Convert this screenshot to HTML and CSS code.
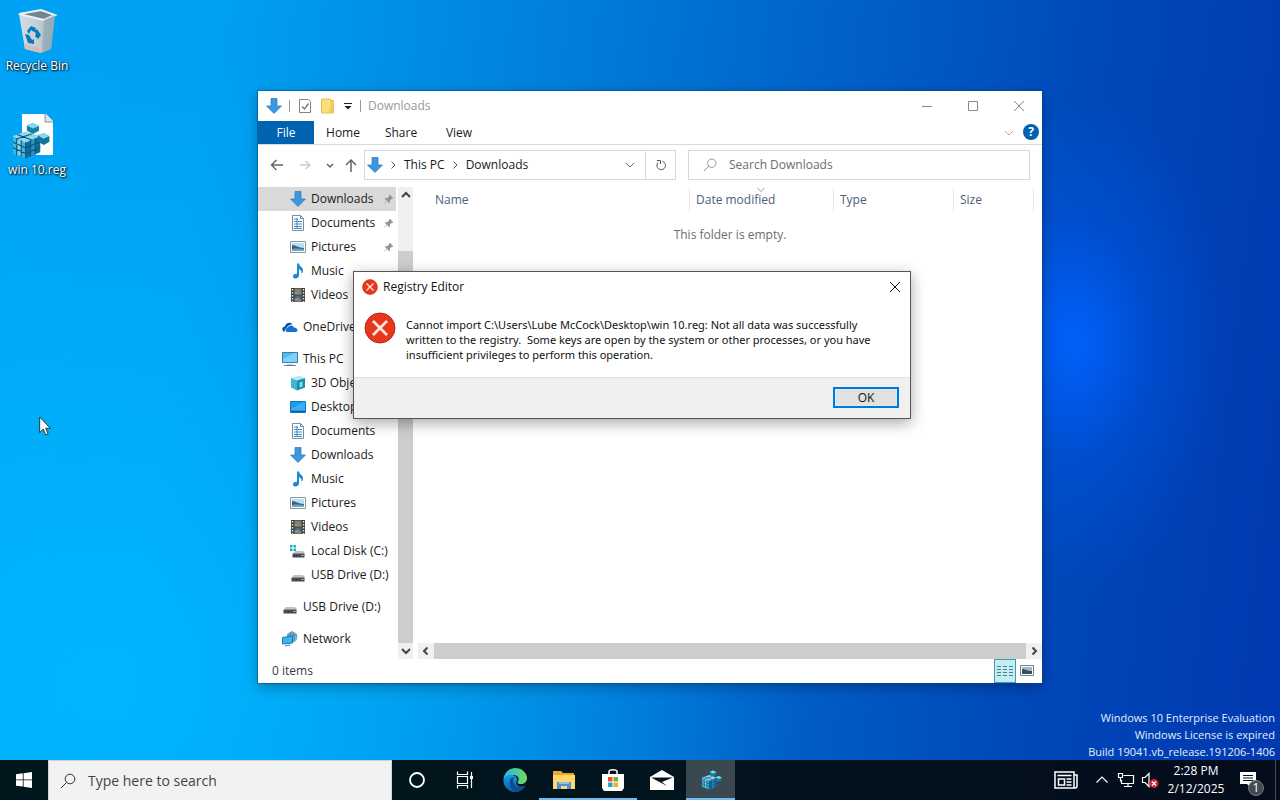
FILE: index.html
```html
<!DOCTYPE html>
<html lang="en">
<head>
    <meta charset="UTF-8">
    <meta name="viewport" content="width=device-width, initial-scale=1.0">
    <title>Desktop</title>
    <link rel="stylesheet" href="styles.css">
</head>
<body>

    <!-- icon sprite -->
    <svg class="sprite" aria-hidden="true">
        <defs>
            <linearGradient id="edge-a" x1="0" y1="0" x2="1" y2="0"><stop offset="0" stop-color="#2bb4e8"/><stop offset="1" stop-color="#6ddc5a"/></linearGradient>
            <linearGradient id="edge-b" x1="0" y1="0" x2="0" y2="1"><stop offset="0" stop-color="#1d9be6"/><stop offset="1" stop-color="#0c59a4"/></linearGradient>
            <linearGradient id="bin-a" x1="0" y1="0" x2="1" y2="0"><stop offset="0" stop-color="#d3dde3"/><stop offset=".55" stop-color="#c2ced6"/><stop offset="1" stop-color="#8fa5b3"/></linearGradient>
        </defs>
        <symbol id="i-down" viewBox="0 0 16 16"><path d="M5 .5h6V8h4.500L8 15.500.5 8H5z" fill="#3c97e0" stroke="#2a78bd" stroke-width=".7"/></symbol>
        <symbol id="i-doc" viewBox="0 0 16 16"><path d="M2.500.5h8l3 3v12h-11z" fill="#fff" stroke="#7b8b97"/><path d="M10.500.5v3h3" fill="none" stroke="#7b8b97"/><path d="M4 4h4M4 6.500h8M4 9h8M4 11.500h8M4 13.500h8M7 3v10" stroke="#3d8fc8"/></symbol>
        <symbol id="i-pic" viewBox="0 0 16 16"><path d="M.5 2.500h15v11H.5z" fill="#fff" stroke="#8a97a1"/><path d="M2 4h12v8H2z" fill="#b9dcf0"/><path d="M2 6c4 0 6 3 12 3v3H2z" fill="#35647f"/><path d="M2 10c4-1 8 0 12 0v2H2z" fill="#6fa5bd"/></symbol>
        <symbol id="i-music" viewBox="0 0 16 16"><path d="M7 .5h1.800c.4 2.800 4.700 3.800 4.200 7.500-.2 1.500-1 2.200-1.800 2.700.9-2.700-.6-4-2.200-4.500v6.300c0 3.300-5.800 4-6 1.200C2.900 11.200 5.500 10.500 7 11z" fill="#1b8ad3"/></symbol>
        <symbol id="i-video" viewBox="0 0 16 16"><path d="M1 1h14v14H1z" fill="#3d3d3d"/><path d="M4.500 1.500h7v6h-7z" fill="#7d7f68"/><path d="M4.500 8.500h7v6h-7z" fill="#36689a"/><path d="M4.500 5l3-2 4 3v1.500h-7zM4.500 12l3-2 4 3v1.500h-7z" fill="#8f8a6a"/><path d="M2.500 2v13M13.500 2v13" stroke="#e4e4e4" stroke-width="1.500" stroke-dasharray="1.500 1.500"/></symbol>
        <symbol id="i-cloud" viewBox="0 0 16 16"><path d="M1.600 12.500C-1 10.500.8 7.600 3 7.500 3.800 3.500 8.500 2.500 10.500 5.500 6 5.500 5.200 8 5 9c-2 .5-2.700 2-2 3.500z" fill="#0a4fa6"/><path d="M5.500 13c-3-.5-2.500-3.700 0-4C6.500 5.500 11 5.700 12 8.500c3-.3 5 3.500 2 4.500z" fill="#1173cf"/></symbol>
        <symbol id="i-pc" viewBox="0 0 16 16"><path d="M.5 1.500h15v10H.5z" fill="#4fb9f1" stroke="#3b7ea8"/><path d="M1 8L12 2h3v9H1z" fill="#7ed1fa"/><path d="M2 14.500h12" stroke="#6a7f8c"/><path d="M5 13.500h6" stroke="#b9c6ce"/></symbol>
        <symbol id="i-cube" viewBox="0 0 16 16"><path d="M1 3l9-2.500 5 2.500-8 2.500z" fill="#b5eaf0"/><path d="M1 3l6 2.500v10L1 12.500z" fill="#3cb6d0"/><path d="M7 5.500L15 3v9.500l-8 3z" fill="#1590ad"/><path d="M9.500 7.500l3-1v5l-3 1z" fill="#8bdce8"/></symbol>
        <symbol id="i-desk" viewBox="0 0 16 16"><path d="M.5 2.500h15v11H.5z" fill="#1c9bea" stroke="#1275bb"/><path d="M1 10L13 3h2v8H1z" fill="#37aef5"/><path d="M1 12.500h14" stroke="#0f5f9e"/></symbol>
        <symbol id="i-drive" viewBox="0 0 16 16"><path d="M4 8h9l2 2.500H2z" fill="#c2c2c2"/><path d="M1.500 10.500h13v4h-13z" fill="#4a4a4a"/><path d="M11.500 12.500h2" stroke="#a7e2a5"/></symbol>
        <symbol id="i-disk" viewBox="0 0 16 16"><path d="M5 8h8l2 2.500H3z" fill="#c2c2c2"/><path d="M2.500 10.500h12v4h-12z" fill="#4a4a4a"/><path d="M11.500 12.500h2" stroke="#a7e2a5"/><path d="M0 2h2.500v2.500H0zM3.500 2H6v2.500H3.500zM0 5.500h2.500V8H0zM3.500 5.500H6V8H3.500z" fill="#18b0c4"/></symbol>
        <symbol id="i-net" viewBox="0 0 16 16"><circle cx="10" cy="6" r="5.500" fill="#7fb3cf"/><path d="M10 .5c-3 3-3 8 0 11M10 .5c3 3 3 8 0 11M5 4h10" fill="none" stroke="#4b88ad"/><path d="M.5 6.500l10-1.500v7L.5 13z" fill="#3eb3ef" stroke="#1878b4"/><path d="M3 15l5-1" stroke="#397fa9"/></symbol>
        <symbol id="i-pin" viewBox="0 0 12 12"><path d="M7 1l4 4-1 1-.8-.2L7 8l.2 2-1 1L4 8.500 1 11.500l-.5-.5 3-3L1 5.800l1-1 2 .2 2.200-2.200L6 2z" fill="#8b949a"/></symbol>
        <symbol id="i-right" viewBox="0 0 10 10"><path d="M3.500 1.500L7 5 3.500 8.500" class="line"/></symbol>
        <symbol id="i-left" viewBox="0 0 10 10"><path d="M6.500 1.500L3 5l3.500 3.500" class="line"/></symbol>
        <symbol id="i-chev" viewBox="0 0 10 10"><path d="M1 3l4 4 4-4" class="line"/></symbol>
        <symbol id="i-chevup" viewBox="0 0 10 10"><path d="M1 7l4-4 4 4" class="line"/></symbol>
        <symbol id="i-x" viewBox="0 0 12 12"><path d="M1 1l10 10M11 1L1 11" class="line"/></symbol>
        <symbol id="i-mag" viewBox="0 0 16 16"><circle cx="10" cy="6" r="4.800" class="line"/><path d="M6.500 9.500L1 15" class="line"/></symbol>
        <symbol id="i-error" viewBox="0 0 32 32"><circle cx="16" cy="16" r="15" fill="#e8371a" stroke="#b92a1a"/><path d="M9 9l14 14M23 9L9 23" stroke="#fbe9e4" stroke-width="2.600"/></symbol>
        <symbol id="i-reg" viewBox="0 0 32 32">
            <path d="M1 13l11-4 12 4-12 5z" fill="#8fd8ec"/>
            <path d="M1 13l11 5v13L1 27z" fill="#45b4d8"/>
            <path d="M12 18l12-5v13l-12 5z" fill="#0f6f9c"/>
            <path d="M5 14.800l3.500 1.600v13L5 28z" fill="#7fd3ea"/>
            <path d="M16 16.500l4-1.700v13L16 29.500z" fill="#2792bd"/>
            <path d="M1 17.500l11 5 12-5M1 22l11 5 12-5M4.700 14.500v14M8.400 16.200v13.500M12 18v13M16 16.500v13M20 14.800v13M5 11.500l12 4.500M17 11l-12 4" fill="none" stroke="#0b5478" stroke-width=".9"/>
            <path d="M13 4l5-2 5 2.500v4L18 11l-5-2.500z" fill="#1781ab"/><path d="M13 4l5-2 5 2.500-5 2z" fill="#83dbf0"/>
            <path d="M22 12l5-1.500 4.500 2.500v4.500L27 20l-5-2.500z" fill="#15749f"/><path d="M22 12l5-1.500 4.500 2.500-5 2z" fill="#83dbf0"/>
        </symbol>
    </svg>

    <main class="desktop">

        <a href="#" class="shortcut shortcut-bin">
            <svg class="shortcut-icon" viewBox="0 0 48 48">
                <path d="M6 6l22-4 14 5-4 34-10 4-16-4z" fill="url(#bin-a)"/>
                <path d="M6 6l22-4 14 5-11 5z" fill="#71858f" stroke="#e9f2f6" stroke-width="2"/>
                <path d="M31 12l11-5-4 34-9 4z" fill="#93a9b7" opacity=".7"/>
                <path d="M11 36l18 4-1 5-16-4z" fill="#d2bfb9"/>
                <path d="M14 23l4-5 5 2-2 4-3-2-2 4zM24 21l4 6-3 4-3-3 1-2-2-3zM12 26l4 1 3 5 2-1v5l-6-1z" fill="#0b77bc"/>
            </svg>
            <span>Recycle Bin</span>
        </a>
        <a href="#" class="shortcut shortcut-reg">
            <svg class="shortcut-icon" viewBox="0 0 48 48">
                <path d="M9 2h24l7 7v34H9z" fill="#fdfdfd"/>
                <path d="M32 2v8h8" fill="#dbe3e8" stroke="#8597a2"/>
                <use href="#i-reg" x="-2" y="8" width="39" height="40"/>
            </svg>
            <span>win 10.reg</span>
        </a>

        <svg class="cursor" viewBox="0 0 12 20"><path d="M.7 1v15.500l3.600-3.400 2.400 5.700 2.400-1-2.400-5.500h4.600z" fill="#fff" stroke="#222" stroke-width=".9"/></svg>

        <section class="window" aria-label="Downloads">
            <header class="titlebar">
                <svg class="icon"><use href="#i-down"/></svg>
                <span class="divider"></span>
                <svg class="icon icon-check" viewBox="0 0 16 16"><path d="M2.500 1.500h9l2 2v11h-11z" fill="#fff" stroke="#8c8079"/><path d="M5 8.500L7.500 11l4-5.500" fill="none" stroke="#7d706a" stroke-width="1.300"/></svg>
                <svg class="icon" viewBox="0 0 16 16"><path d="M1.500 1h9v1.500h3V15h-12z" fill="#fae07d" stroke="#e6bf4f"/><path d="M11 3h2.500v12H9z" fill="#f2ca54"/></svg>
                <svg class="icon-small" viewBox="0 0 10 10"><path d="M1 2.500h8" stroke="#222"/><path d="M1.500 5h7L5 8.500z" fill="#222"/></svg>
                <span class="divider"></span>
                <span class="titlebar-text">Downloads</span>
                <div class="caption-buttons">
                    <button type="button" aria-label="Minimize"><svg viewBox="0 0 12 12"><path d="M1 6.500h10" class="line"/></svg></button>
                    <button type="button" aria-label="Maximize"><svg viewBox="0 0 12 12"><path d="M1.500 1.500h9v9h-9z" class="line"/></svg></button>
                    <button type="button" aria-label="Close"><svg><use href="#i-x"/></svg></button>
                </div>
            </header>

            <nav class="ribbon">
                <button type="button" class="ribbon-tab active">File</button>
                <button type="button" class="ribbon-tab">Home</button>
                <button type="button" class="ribbon-tab">Share</button>
                <button type="button" class="ribbon-tab">View</button>
                <button type="button" class="ribbon-expand" aria-label="Expand the Ribbon"><svg><use href="#i-chev"/></svg></button>
                <button type="button" class="help" aria-label="Help">?</button>
            </nav>

            <div class="toolbar">
                <div class="nav-buttons">
                    <button type="button" aria-label="Back"><svg viewBox="0 0 14 14"><path d="M13 7H2M6.500 2L1.500 7l5 5" class="line"/></svg></button>
                    <button type="button" aria-label="Forward" disabled><svg viewBox="0 0 14 14"><path d="M2 7h10M7.500 3L12 7l-4.500 4" class="line"/></svg></button>
                    <button type="button" class="recent" aria-label="Recent locations"><svg viewBox="0 0 10 10"><path d="M2 4l3 3 3-3" class="line"/></svg></button>
                    <button type="button" class="up" aria-label="Up"><svg viewBox="0 0 14 14"><path d="M7 14V2M2 7l5-5 5 5" class="line"/></svg></button>
                </div>
                <div class="address">
                    <svg class="icon"><use href="#i-down"/></svg>
                    <svg class="crumb-arrow"><use href="#i-right"/></svg>
                    <a href="#">This PC</a>
                    <svg class="crumb-arrow"><use href="#i-right"/></svg>
                    <a href="#">Downloads</a>
                    <button type="button" class="address-drop" aria-label="Previous locations"><svg><use href="#i-chev"/></svg></button>
                    <button type="button" class="refresh" aria-label="Refresh"><svg viewBox="0 0 12 12"><path d="M3 3.500a4.300 4.300 0 1 0 4.500-1.200M2 1.500h3.500V5" class="line"/></svg></button>
                </div>
                <label class="search">
                    <svg><use href="#i-mag"/></svg>
                    <input type="text" placeholder="Search Downloads" aria-label="Search Downloads">
                </label>
            </div>

            <div class="window-body">
                <nav class="tree">
                    <a href="#" class="tree-item child selected"><svg class="icon"><use href="#i-down"/></svg>Downloads<svg class="pin"><use href="#i-pin"/></svg></a>
                    <a href="#" class="tree-item child"><svg class="icon"><use href="#i-doc"/></svg>Documents<svg class="pin"><use href="#i-pin"/></svg></a>
                    <a href="#" class="tree-item child"><svg class="icon"><use href="#i-pic"/></svg>Pictures<svg class="pin"><use href="#i-pin"/></svg></a>
                    <a href="#" class="tree-item child"><svg class="icon"><use href="#i-music"/></svg>Music</a>
                    <a href="#" class="tree-item child"><svg class="icon"><use href="#i-video"/></svg>Videos</a>
                    <a href="#" class="tree-item root"><svg class="icon"><use href="#i-cloud"/></svg>OneDrive</a>
                    <a href="#" class="tree-item root"><svg class="icon"><use href="#i-pc"/></svg>This PC</a>
                    <a href="#" class="tree-item child"><svg class="icon"><use href="#i-cube"/></svg>3D Objects</a>
                    <a href="#" class="tree-item child"><svg class="icon"><use href="#i-desk"/></svg>Desktop</a>
                    <a href="#" class="tree-item child"><svg class="icon"><use href="#i-doc"/></svg>Documents</a>
                    <a href="#" class="tree-item child"><svg class="icon"><use href="#i-down"/></svg>Downloads</a>
                    <a href="#" class="tree-item child"><svg class="icon"><use href="#i-music"/></svg>Music</a>
                    <a href="#" class="tree-item child"><svg class="icon"><use href="#i-pic"/></svg>Pictures</a>
                    <a href="#" class="tree-item child"><svg class="icon"><use href="#i-video"/></svg>Videos</a>
                    <a href="#" class="tree-item child"><svg class="icon"><use href="#i-disk"/></svg>Local Disk (C:)</a>
                    <a href="#" class="tree-item child"><svg class="icon"><use href="#i-drive"/></svg>USB Drive (D:)</a>
                    <a href="#" class="tree-item root"><svg class="icon"><use href="#i-drive"/></svg>USB Drive (D:)</a>
                    <a href="#" class="tree-item root"><svg class="icon"><use href="#i-net"/></svg>Network</a>
                </nav>
                <div class="scroll-v">
                    <button type="button" aria-label="Scroll up"><svg><use href="#i-chevup"/></svg></button>
                    <div class="scroll-track"><div class="scroll-thumb"></div></div>
                    <button type="button" aria-label="Scroll down"><svg><use href="#i-chev"/></svg></button>
                </div>
                <div class="content">
                    <table class="files">
                        <thead>
                            <tr>
                                <th class="col-name">Name</th>
                                <th class="col-date">Date modified<svg class="sort" viewBox="0 0 10 6"><path d="M1.500 1L5 4.500 8.500 1" class="line"/></svg></th>
                                <th class="col-type">Type</th>
                                <th class="col-size">Size</th>
                            </tr>
                        </thead>
                    </table>
                    <p class="empty">This folder is empty.</p>
                    <div class="scroll-h">
                        <button type="button" aria-label="Scroll left"><svg><use href="#i-left"/></svg></button>
                        <div class="scroll-thumb"></div>
                        <button type="button" aria-label="Scroll right"><svg><use href="#i-right"/></svg></button>
                    </div>
                </div>
            </div>

            <footer class="statusbar">
                <span>0 items</span>
                <div class="view-buttons">
                    <button type="button" class="active" aria-label="Details"><svg viewBox="0 0 16 16"><path d="M0 3.500h4M6 3.500h4M12 3.500h4M0 6.500h4M6 6.500h4M12 6.500h4M0 9.500h4M6 9.500h4M12 9.500h4M0 12.500h4M6 12.500h4M12 12.500h4" stroke="#4f7d8e"/></svg></button>
                    <button type="button" aria-label="Large icons"><svg viewBox="0 0 16 16"><path d="M1.500 2.500h13v10h-13z" fill="#fff" stroke="#76828a"/><path d="M3 4h10v7H3z" fill="#9db9c9"/><path d="M3 6c3 0 5 2 10 2v3H3z" fill="#35505f"/></svg></button>
                </div>
            </footer>
        </section>

        <section class="dialog" role="alertdialog" aria-labelledby="dialog-title">
            <header class="dialog-title">
                <svg class="icon"><use href="#i-error"/></svg>
                <span id="dialog-title">Registry Editor</span>
                <button type="button" class="dialog-close" aria-label="Close"><svg><use href="#i-x"/></svg></button>
            </header>
            <div class="dialog-body">
                <svg class="dialog-icon"><use href="#i-error"/></svg>
                <p>Cannot import C:\Users\Lube McCock\Desktop\win 10.reg: Not all data was successfully<br>written to the registry.&nbsp; Some keys are open by the system or other processes, or you have<br>insufficient privileges to perform this operation.</p>
            </div>
            <footer class="dialog-footer">
                <button type="button" class="ok">OK</button>
            </footer>
        </section>

        <div class="watermark">
            Windows 10 Enterprise Evaluation<br>
            Windows License is expired<br>
            Build 19041.vb_release.191206-1406
        </div>
    </main>

    <footer class="taskbar">
        <button type="button" class="start" aria-label="Start"><svg viewBox="0 0 16 16"><path d="M0 2.300l6.800-1v6.200H0zM7.600 1.200L16 0v7.500H7.600zM0 8.300h6.800v6.300L0 13.700zM7.600 8.300H16V16l-8.400-1.200z" fill="#fff"/></svg></button>
        <label class="taskbar-search">
            <svg><use href="#i-mag"/></svg>
            <input type="text" placeholder="Type here to search" aria-label="Type here to search">
        </label>
        <div class="apps">
            <button type="button" class="app" aria-label="Cortana"><svg viewBox="0 0 24 24"><circle cx="12" cy="12" r="7" fill="none" stroke="#fff" stroke-width="1.800"/></svg></button>
            <button type="button" class="app" aria-label="Task View"><svg viewBox="0 0 24 24"><path d="M3.500 3.500v3h10v-3M3.500 20.500v-3h10v3M3.500 8.500h10v7h-10zM17.500 4v16" fill="none" stroke="#fff" stroke-width="1.200"/><path d="M16 8h3v3h-3z" fill="#fff"/></svg></button>
            <button type="button" class="app" aria-label="Microsoft Edge"><svg viewBox="0 0 24 24">
                <path d="M.5 12C.5 5 6 0 12 0c7 0 12 5 12 10 0 4-3 6-6 6-4 0-4-1.500-3-3 2-3-1-6-4.500-6C6 7 2 9 .5 12z" fill="url(#edge-a)"/>
                <path d="M.5 12C2 8 7 6 11 7.500c3 1.200 4 4 2.500 6C12 16 15 19 19 18.500c1.500 0 2.500-.6 3.500-1C20 22 16 24 12 24 5 24 0 18 .5 12z" fill="url(#edge-b)"/>
                <path d="M9 9.500C5.500 12 6 20 12 24c4 0 8-2 10.500-6.500-3 2-9 2.500-11.500-1.500-1.500-2.500-1-5 .5-6.500z" fill="#0e4b91"/>
            </svg></button>
            <button type="button" class="app running" aria-label="File Explorer"><svg viewBox="0 0 24 24"><path d="M1 3h8l2 2h11v5H1z" fill="#e9a72c"/><path d="M1 7h22v14H1z" fill="#ffd667"/><path d="M5 21v-7h14v7h-4v-3H9v3z" fill="#4b94d8"/><path d="M7 14h10v2H7z" fill="#8bc0ea"/></svg></button>
            <button type="button" class="app running" aria-label="Microsoft Store"><svg viewBox="0 0 24 24"><path d="M8 6V3.500C8 1 16 1 16 3.500V6" fill="none" stroke="#fff" stroke-width="1.500"/><path d="M1 6h22v14l-2 3H3l-2-3z" fill="#fff"/><path d="M7 9h4.500v4.500H7z" fill="#e84f2a"/><path d="M12.500 9H17v4.500h-4.500z" fill="#7aae28"/><path d="M7 14.500h4.500V19H7z" fill="#28a0da"/><path d="M12.500 14.500H17V19h-4.500z" fill="#f0b323"/></svg></button>
            <button type="button" class="app" aria-label="Mail"><svg viewBox="0 0 24 24"><path d="M0 9l12-7 12 7v13H0z" fill="#fff"/><path d="M1 9.500h22L12 14l5 4z" fill="#06161c"/></svg></button>
            <button type="button" class="app running current" aria-label="Registry Editor"><svg viewBox="0 0 32 32"><use href="#i-reg" x="3" y="1" width="28" height="29"/></svg></button>
        </div>
        <div class="tray">
            <button type="button" class="news" aria-label="News and interests"><svg viewBox="0 0 24 18"><path d="M1 1h19v16H1zM20 4h3v11q0 2-2 2h-3M3.500 4.500h14M4.500 8h6v6h-6zM12.500 8h5M12.500 11h5M12.500 14h5" fill="none" stroke="#fff" stroke-width="1.500"/></svg></button>
            <button type="button" class="tray-icon" aria-label="Show hidden icons"><svg viewBox="0 0 18 18"><path d="M3.500 11.500L9 6l5.500 5.500" class="line"/></svg></button>
            <button type="button" class="tray-icon" aria-label="Network"><svg viewBox="0 0 18 18"><path d="M6.500 4.500h10v8H4.500V9M11 12.500v3M7 15.500h8M1.500 2.500h4v4h-4zM3.500 6.500v4" class="line"/></svg></button>
            <button type="button" class="tray-icon" aria-label="Volume"><svg viewBox="0 0 18 18"><path d="M1.500 6.500H4l4-4v13l-4-4H1.500z" class="line"/><circle cx="13" cy="12.500" r="4.500" fill="#d3212e"/><path d="M11 10.500l4 4M15 10.500l-4 4" stroke="#fff" stroke-width="1.300"/></svg></button>
            <div class="clock">
                <span>2:28 PM</span>
                <span>2/12/2025</span>
            </div>
            <button type="button" class="notifications" aria-label="Notifications">
                <svg viewBox="0 0 16 16"><path d="M0 0h16v12h-5v4l-4-4H0z" fill="#fff"/><path d="M3 3.500h10M3 6h10M3 8.500h10" stroke="#07121c"/></svg>
                <span class="badge">1</span>
            </button>
        </div>
    </footer>

</body>
</html>
```
FILE: styles.css
```css
:root {
    --text: #1a1a1a;
    --text-muted: #6d6d6d;
    --text-header: #4c607a;
    --line: #d9d9d9;
    --thumb: #cdcdcd;
    --accent: #0063b1;
}

* { box-sizing: border-box; }

body {
    margin: 0;
    height: 100vh;
    display: flex;
    flex-direction: column;
    overflow: hidden;
    font-family: "Segoe UI", "Open Sans", "Noto Sans", sans-serif;
    font-size: 12px;
    line-height: 16px;
    color: var(--text);
}

button {
    display: flex; align-items: center; justify-content: center;
    padding: 0; border: 0; background: none;
    font: inherit; color: inherit;
}
input { border: 0; padding: 0; background: none; font: inherit; color: inherit; outline: none; min-width: 0; flex: 1; }
a { color: inherit; text-decoration: none; }
p { margin: 0; }

.sprite { position: absolute; width: 0; height: 0; }
.line { fill: none; stroke: currentColor; }
.icon { width: 16px; height: 16px; flex-shrink: 0; }
.icon-small { width: 10px; height: 10px; }

/* == Desktop == */
.desktop {
    flex: 1;
    position: relative;
    min-height: 0;
    background:
        radial-gradient(ellipse 150px 240px at 84% 45%, rgba(0, 98, 255, 0.95), rgba(0, 88, 235, 0.4) 50%, rgba(0, 80, 220, 0) 100%),
        radial-gradient(ellipse 700px 640px at 8% 90%, rgba(0, 184, 255, 0.9), rgba(0, 180, 255, 0) 100%),
        linear-gradient(97deg, #00a2f5 0%, #00a0f2 16%, #0086e0 36%, #0066cc 58%, #0049ba 80%, #0038b0 100%);
}

.shortcut {
    position: absolute; left: 0; width: 74px;
    display: flex; flex-direction: column; align-items: center; gap: 2px;
    color: #fff;
    text-shadow: 1px 1px 2px #000, 0 0 2px rgba(0, 0, 0, 0.8);
}
.shortcut-bin { top: 8px; }
.shortcut-reg { top: 112px; }
.shortcut-icon { width: 48px; height: 48px; }

.cursor { position: absolute; left: 39px; top: 416px; width: 12px; height: 20px; }

.watermark {
    position: absolute; right: 5px; bottom: 0;
    font-size: 11px; line-height: 17px; text-align: right;
    color: #e4eefb;
}

/* == Explorer window == */
.window {
    position: absolute; left: 258px; right: 238px; top: 91px; bottom: 77px;
    display: flex; flex-direction: column;
    background: #fff;
    box-shadow: 0 0 0 1px rgba(0, 70, 130, 0.5), 0 4px 12px rgba(0, 0, 0, 0.3);
}

.titlebar { display: flex; align-items: center; gap: 7px; height: 30px; padding-left: 8px; flex-shrink: 0; }
.titlebar-text { color: #999; }
.divider { width: 1px; height: 12px; background: #999; }
.caption-buttons { margin-left: auto; display: flex; color: #888; }
.caption-buttons button { width: 46px; height: 30px; }
.caption-buttons svg { width: 12px; height: 12px; }

.ribbon { display: flex; height: 24px; border-bottom: 1px solid var(--line); flex-shrink: 0; }
.ribbon-tab { width: 58px; }
.ribbon-tab.active { width: 56px; background: var(--accent); color: #fff; }
.ribbon-expand { margin-left: auto; width: 26px; color: #aaa; }
.ribbon-expand svg { width: 10px; height: 10px; }
.help {
    width: 16px; height: 16px; margin: 3px 3px 0 1px;
    border-radius: 50%; background: var(--accent); color: #fff; font-weight: 700;
}

.toolbar { display: flex; align-items: center; height: 42px; padding: 0 12px 2px 0; flex-shrink: 0; }
.nav-buttons { display: flex; width: 106px; padding-left: 11px; color: #666; }
.nav-buttons button { width: 16px; height: 30px; margin-right: 12px; }
.nav-buttons svg { width: 14px; height: 14px; }
.nav-buttons .line { stroke-width: 1.5; }
.nav-buttons button:disabled { color: #ccc; }
.nav-buttons .recent { width: 10px; margin-right: 8px; }
.nav-buttons .recent svg { width: 10px; height: 10px; }
.nav-buttons .up { margin-right: 0; }
.address { flex: 1; display: flex; align-items: center; height: 30px; padding-left: 2px; border: 1px solid var(--line); }
.crumb-arrow { width: 10px; height: 10px; margin: 0 6px 0 5px; color: #555; }
.address-drop { margin-left: auto; width: 30px; height: 28px; color: #666; }
.address-drop svg { width: 10px; height: 10px; }
.address-drop .line { stroke-width: 2; }
.refresh { width: 30px; height: 28px; border-left: 1px solid var(--line); color: #555; }
.refresh svg { width: 12px; height: 12px; }
.search {
    width: 342px; height: 30px; margin-left: 12px; padding-left: 14px;
    display: flex; align-items: center; gap: 12px;
    border: 1px solid var(--line); color: #888;
}
.search svg { width: 14px; height: 14px; }
.search input::placeholder { color: var(--text-muted); opacity: 1; }

.window-body { flex: 1; display: flex; min-height: 0; }

.tree { width: 140px; overflow: hidden; }
.tree-item { display: flex; align-items: center; gap: 5px; height: 24px; padding-right: 4px; white-space: nowrap; }
.tree-item.child { padding-left: 32px; }
.tree-item.root { padding-left: 24px; margin-top: 8px; }
.tree-item.selected { background: #d9d9d9; margin-right: 2px; padding-right: 2px; }
.tree-item .pin { width: 10px; height: 10px; margin-left: auto; }

.scroll-v { width: 15px; display: flex; flex-direction: column; background: #f0f0f0; }
.scroll-v button, .scroll-h button { width: 16px; height: 16px; color: #444; }
.scroll-v svg, .scroll-h svg { width: 10px; height: 10px; }
.scroll-v .scroll-track { flex: 1; display: flex; flex-direction: column; justify-content: flex-end; }
.scroll-v .scroll-thumb { height: 89%; background: var(--thumb); }
.scroll-h { margin-top: auto; display: flex; height: 16px; background: #f0f0f0; }
.scroll-h .scroll-thumb { flex: 1; background: var(--thumb); }
.scroll-v use, .scroll-h use { stroke-width: 2; }

.content { flex: 1; display: flex; flex-direction: column; min-width: 0; padding-left: 5px; }
.files { margin: 2px 8px 0 11px; border-collapse: collapse; table-layout: fixed; }
.files th {
    position: relative; height: 22px; padding: 0 6px;
    border-right: 1px solid #e5e5e5;
    font-weight: 400; text-align: left; color: var(--text-header);
}
.col-date { width: 144px; }
.col-type { width: 120px; }
.col-size { width: 80px; }
.sort { position: absolute; left: 46%; top: -2px; width: 10px; height: 6px; color: #999; }
.empty { margin-top: 16px; text-align: center; color: var(--text-muted); }

.statusbar { display: flex; align-items: center; height: 24px; padding-left: 14px; flex-shrink: 0; color: #333b50; }
.view-buttons { margin-left: auto; display: flex; padding-right: 4px; }
.view-buttons button { width: 22px; height: 24px; }
.view-buttons svg { width: 16px; height: 16px; }
.view-buttons .active { background: #c4ecf4; border: 1px solid #3b9cae; }

/* == Error dialog == */
.dialog {
    position: absolute; left: 353px; top: 271px; width: 558px;
    background: #fff;
    border: 1px solid #555;
    box-shadow: 0 4px 14px rgba(0, 0, 0, 0.35);
    color: #111;
}
.dialog-title { display: flex; align-items: center; gap: 5px; height: 30px; padding-left: 8px; }
.dialog-close { margin-left: auto; width: 30px; height: 30px; }
.dialog-close svg { width: 12px; height: 12px; }
.dialog-body { display: flex; align-items: flex-start; gap: 10px; padding: 10px 10px 15px; }
.dialog-body p { padding-top: 5px; font-family: "Noto Sans", sans-serif; font-size: 11px; line-height: 15px; white-space: nowrap; }
.dialog-icon { width: 32px; height: 32px; flex-shrink: 0; }
.dialog-footer { display: flex; justify-content: flex-end; padding: 9px 11px 10px; background: #f0f0f0; border-top: 1px solid #dfdfdf; }
.ok { width: 66px; height: 21px; border: 2px solid #0078d7; background: #e1e1e1; box-shadow: inset 0 0 0 1px #d4edfa; }

/* == Taskbar == */
.taskbar { display: flex; height: 40px; flex-shrink: 0; background: linear-gradient(90deg, #00171d, #02131d 60%, #040c1c); color: #fff; }
.start { width: 48px; }
.start svg { width: 16px; height: 16px; }
.taskbar-search {
    width: 344px; padding-left: 11px;
    display: flex; align-items: center; gap: 12px;
    background: #f2f2f2; border: 1px solid #d0d4d6; border-bottom: 0;
    font-size: 14px; line-height: 20px; color: #333;
}
.taskbar-search svg { width: 16px; height: 16px; }
.taskbar-search .line { stroke-width: 1.3; }
.taskbar-search input::placeholder { color: #444; opacity: 1; }

.apps { display: flex; }
.app { width: 49px; border-bottom: 2px solid transparent; border-top: 2px solid transparent; }
.app svg { width: 24px; height: 24px; }
.app.running { border-bottom-color: #76b9ed; }
.app.current { background: #3a4850; border-top-color: #3a4850; }

.tray { margin-left: auto; display: flex; align-items: center; padding-right: 4px; }
.news { margin-right: 12px; }
.news svg { width: 24px; height: 18px; }
.tray-icon { width: 24px; height: 40px; }
.tray-icon svg { width: 18px; height: 18px; }
.tray-icon .line { stroke-width: 1.2; }
.clock { width: 68px; display: flex; flex-direction: column; align-items: center; line-height: 18px; }
.notifications { position: relative; width: 46px; height: 40px; border-right: 1px solid #444c58; }
.notifications svg { width: 16px; height: 16px; margin-right: 10px; }
.badge {
    position: absolute; right: 11px; bottom: 4px;
    width: 16px; height: 16px; border-radius: 50%;
    background: #454b52; border: 1px solid #777;
    line-height: 14px;
}
```
